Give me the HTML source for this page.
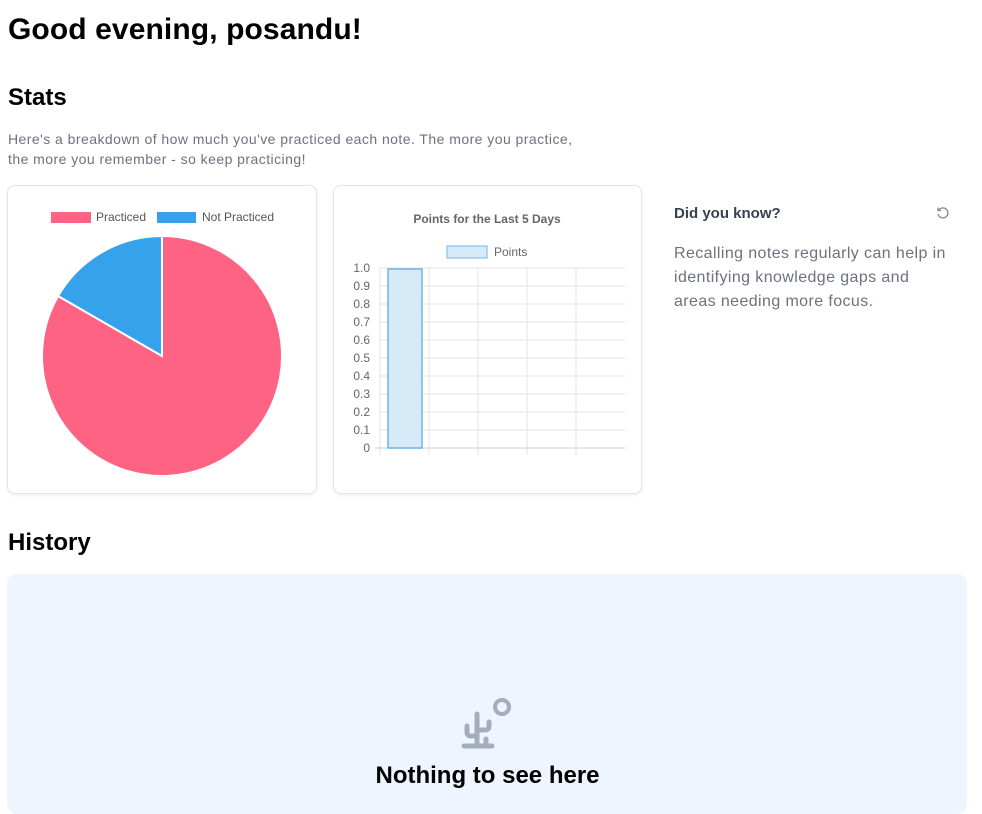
<!DOCTYPE html>
<html><head><style>
body{margin:0;background:#fff;font-family:"Liberation Sans",Arial,sans-serif;width:982px;height:795px;overflow:hidden;position:relative}
.a{position:absolute}
h1{position:absolute;left:8px;top:13px;margin:0;font-size:30px;font-weight:bold;color:#000;letter-spacing:0.1px}
h2{position:absolute;left:8px;margin:0;font-size:24px;font-weight:bold;color:#000}
.card{position:absolute;border:1px solid #e2e5ea;border-radius:8px;background:#fff;box-shadow:0 1px 3px rgba(0,0,0,.08)}
</style></head><body>
<h1>Good evening, posandu!</h1>
<h2 style="top:84px">Stats</h2>
<div class="a" style="left:8px;top:129px;font-size:14px;line-height:20px;color:#6b7280;letter-spacing:0.45px">Here's a breakdown of how much you've practiced each note. The more you practice,<br>the more you remember - so keep practicing!</div>
<div class="card" style="left:7px;top:185px;width:308px;height:307px">
<svg width="308" height="307" style="position:absolute;left:0;top:0">
<rect x="43" y="26" width="40" height="11" fill="#ff6384"/>
<text x="88" y="35" font-size="12" fill="#555" font-family="Liberation Sans">Practiced</text>
<rect x="149" y="26" width="39" height="11" fill="#36a2eb"/>
<text x="194" y="35" font-size="12" fill="#555" font-family="Liberation Sans">Not Practiced</text>
<path d="M154 170 L154 50 A120 120 0 1 1 50.1 110 Z" fill="#ff6384" stroke="#fff" stroke-width="2"/>
<path d="M154 170 L50.1 110 A120 120 0 0 1 154 50 Z" fill="#36a2eb" stroke="#fff" stroke-width="2"/>
</svg></div>
<div class="card" style="left:333px;top:185px;width:307px;height:307px">
<svg width="307" height="307" style="position:absolute;left:-1px;top:-1px" font-family="Liberation Sans">
<text x="154" y="38" font-size="12" font-weight="bold" fill="#666" text-anchor="middle">Points for the Last 5 Days</text>
<rect x="114" y="61" width="40" height="12" fill="#d6eaf8" stroke="#6cb5ea" stroke-width="1"/>
<text x="161" y="71" font-size="12" fill="#666">Points</text>
<g stroke="#e3e3e3" stroke-width="1">
<line x1="47" y1="83" x2="292" y2="83"/><line x1="47" y1="101" x2="292" y2="101"/><line x1="47" y1="119" x2="292" y2="119"/><line x1="47" y1="137" x2="292" y2="137"/><line x1="47" y1="155" x2="292" y2="155"/><line x1="47" y1="173" x2="292" y2="173"/><line x1="47" y1="191" x2="292" y2="191"/><line x1="47" y1="209" x2="292" y2="209"/><line x1="47" y1="227" x2="292" y2="227"/><line x1="47" y1="245" x2="292" y2="245"/>
<line x1="47" y1="83" x2="47" y2="270"/><line x1="96" y1="83" x2="96" y2="270"/><line x1="145" y1="83" x2="145" y2="270"/><line x1="194" y1="83" x2="194" y2="270"/><line x1="243" y1="83" x2="243" y2="270"/>
</g>
<line x1="42" y1="263" x2="292" y2="263" stroke="#ccc"/>
<rect x="55" y="84" width="34" height="179" fill="#d6eaf8" stroke="#6cb5ea" stroke-width="1.5"/>
<g font-size="12" fill="#666" text-anchor="end">
<text x="37" y="87">1.0</text><text x="37" y="105">0.9</text><text x="37" y="123">0.8</text><text x="37" y="141">0.7</text><text x="37" y="159">0.6</text><text x="37" y="177">0.5</text><text x="37" y="195">0.4</text><text x="37" y="213">0.3</text><text x="37" y="231">0.2</text><text x="37" y="249">0.1</text><text x="37" y="267">0</text>
</g></svg></div>
<div class="a" style="left:674px;top:205px;font-size:15px;font-weight:bold;color:#374151">Did you know?</div>
<svg class="a" style="left:935px;top:205px" width="16" height="16" viewBox="0 0 16 16" fill="none" stroke="#888" stroke-width="1.3"><path d="M3.5 5.5A5 5 0 1 1 3 9"/><path d="M3 2.5v3h3"/></svg>
<div class="a" style="left:674px;top:242px;width:275px;font-size:16px;line-height:24px;color:#6b7280;letter-spacing:0.4px">Recalling notes regularly can help in identifying knowledge gaps and areas needing more focus.</div>
<h2 style="top:529px">History</h2>
<div class="a" style="left:7px;top:574px;width:960px;height:240px;background:#eff5ff;border-radius:10px"></div>
<svg class="a" style="left:455px;top:692px" width="60" height="60" viewBox="0 0 60 60" fill="none" stroke="#a4adbc" stroke-width="5" stroke-linecap="round"><circle cx="47" cy="15" r="7" stroke-width="4"/><path d="M9 54h28M22 54V22M12 34v6q0 4 4 4h6M34 30v4q0 4-4 4h-8M31 47v7"/></svg>
<div class="a" style="left:0;width:975px;top:762px;text-align:center;font-size:24px;font-weight:bold;color:#000">Nothing to see here</div>
</body></html>
